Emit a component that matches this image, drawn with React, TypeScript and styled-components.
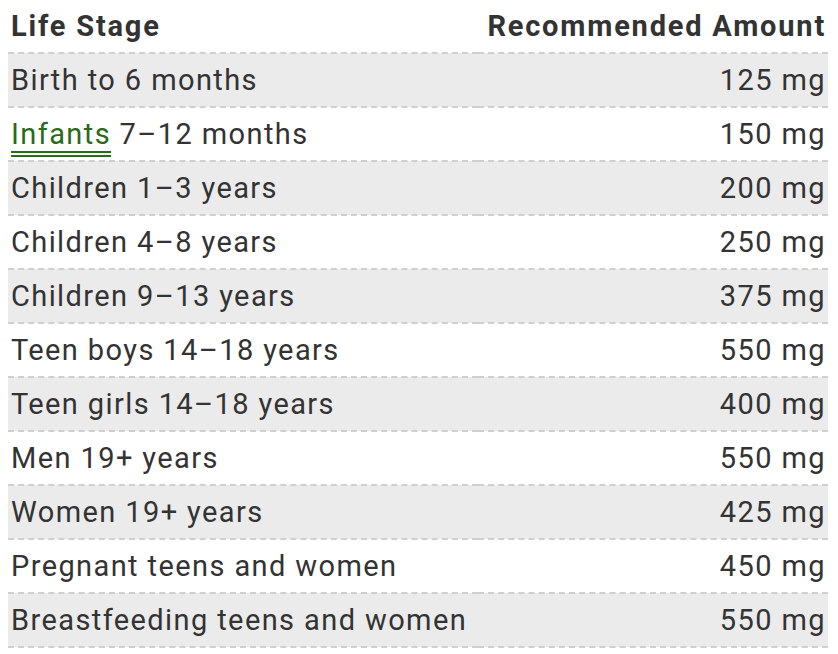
import React from 'react';
import styled, { createGlobalStyle } from 'styled-components';

const GlobalStyle = createGlobalStyle`
  body {
    margin: 0;
    background: #fff;
    font-family: Roboto, "Liberation Sans", sans-serif;
    color: #333;
  }
`;

const Wrapper = styled.div`
  padding: 0 10px 0 8px;
`;

const Table = styled.table`
  width: 100%;
  border-collapse: collapse;
  font-size: 29px;
  line-height: 1;
  letter-spacing: 1.4px;
`;

const HeadCell = styled.th<{ $right?: boolean }>`
  height: 52px;
  padding: 0 ${(p) => (p.$right ? '2px' : '3px')} 0 3px;
  font-weight: 700;
  letter-spacing: 1.8px;
  text-align: ${(p) => (p.$right ? 'right' : 'left')};
  border-bottom: 2px dashed #cfcfcf;
  vertical-align: middle;
`;

const Row = styled.tr<{ $shaded: boolean }>`
  background: ${(p) => (p.$shaded ? '#ebebeb' : '#fff')};
`;

const Cell = styled.td<{ $right?: boolean }>`
  height: 52px;
  padding: 0 ${(p) => (p.$right ? '2px' : '3px')} 0 3px;
  text-align: ${(p) => (p.$right ? 'right' : 'left')};
  border-bottom: 2px dashed #cfcfcf;
  vertical-align: middle;
`;

const Link = styled.a`
  color: #2a6a1a;
  text-decoration: none;
  border-bottom: 6px double #2a6a1a;
`;

const rows: { link?: string; stage: string; amount: string }[] = [
  { stage: 'Birth to 6 months', amount: '125 mg' },
  { link: 'Infants', stage: ' 7–12 months', amount: '150 mg' },
  { stage: 'Children 1–3 years', amount: '200 mg' },
  { stage: 'Children 4–8 years', amount: '250 mg' },
  { stage: 'Children 9–13 years', amount: '375 mg' },
  { stage: 'Teen boys 14–18 years', amount: '550 mg' },
  { stage: 'Teen girls 14–18 years', amount: '400 mg' },
  { stage: 'Men 19+ years', amount: '550 mg' },
  { stage: 'Women 19+ years', amount: '425 mg' },
  { stage: 'Pregnant teens and women', amount: '450 mg' },
  { stage: 'Breastfeeding teens and women', amount: '550 mg' },
];

export default function App() {
  return (
    <>
      <GlobalStyle />
      <Wrapper>
        <Table>
          <thead>
            <tr>
              <HeadCell>Life Stage</HeadCell>
              <HeadCell $right>Recommended Amount</HeadCell>
            </tr>
          </thead>
          <tbody>
            {rows.map((r, i) => (
              <Row key={i} $shaded={i % 2 === 0}>
                <Cell>
                  {r.link && <Link href="#">{r.link}</Link>}
                  {r.stage}
                </Cell>
                <Cell $right>{r.amount}</Cell>
              </Row>
            ))}
          </tbody>
        </Table>
      </Wrapper>
    </>
  );
}
